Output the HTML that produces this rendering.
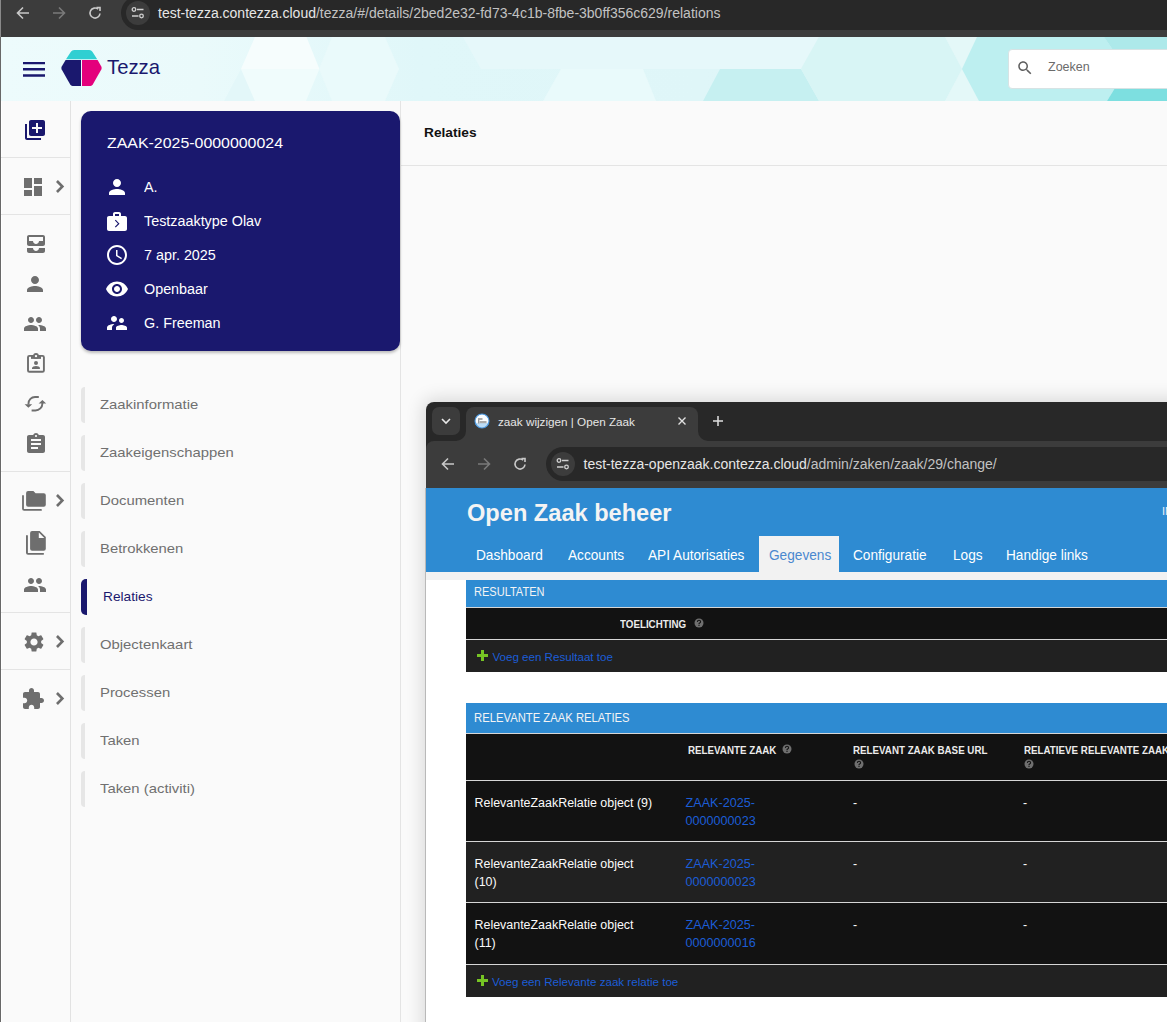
<!DOCTYPE html>
<html><head><meta charset="utf-8">
<style>
*{margin:0;padding:0;box-sizing:border-box}
html,body{width:1167px;height:1022px;overflow:hidden;background:#fafafa;font-family:"Liberation Sans",sans-serif}
.a{position:absolute}
.t{position:absolute;line-height:1;white-space:nowrap}
svg{position:absolute;overflow:visible}
</style></head><body>

<!-- ===== top browser chrome ===== -->
<div class="a" style="left:0;top:0;width:1167px;height:37px;background:#3c3c3c"></div>
<div class="a" style="left:121px;top:-4px;width:1100px;height:34px;border-radius:17px;background:#282828"></div>
<div class="a" style="left:126px;top:1px;width:24px;height:24px;border-radius:12px;background:#3c3c3c"></div>
<!-- back -->
<svg style="left:15px;top:5px" width="16" height="16" viewBox="0 0 16 16"><path d="M14 8H3M8 2.5L2.5 8 8 13.5" fill="none" stroke="#c8c8c8" stroke-width="1.6"/></svg>
<svg style="left:51px;top:5px" width="16" height="16" viewBox="0 0 16 16"><path d="M2 8h11M8 2.5L13.5 8 8 13.5" fill="none" stroke="#7a7a7a" stroke-width="1.6"/></svg>
<svg style="left:87px;top:5px" width="16" height="16" viewBox="0 0 16 16"><path d="M13 8.5A5 5 0 1 1 11.2 4.2" fill="none" stroke="#c8c8c8" stroke-width="1.6"/><path d="M9.5 2.5h3.5v3.5" fill="none" stroke="#c8c8c8" stroke-width="1.6"/></svg>
<svg style="left:131px;top:6px" width="14" height="14" viewBox="0 0 14 14"><circle cx="3" cy="3.5" r="1.8" fill="none" stroke="#d0d0d0" stroke-width="1.3"/><path d="M6 3.5h6.5M1 10h6.5" stroke="#d0d0d0" stroke-width="1.3"/><circle cx="10.5" cy="10" r="1.8" fill="none" stroke="#d0d0d0" stroke-width="1.3"/></svg>
<div class="t" style="left:158px;top:6px;font-size:14px;color:#e6e6e6">test-tezza.contezza.cloud<span style="color:#c2c2c2">/tezza/#/details/2bed2e32-fd73-4c1b-8fbe-3b0ff356c629/relations</span></div>
<div class="a" style="left:0;top:0;width:1px;height:1022px;background:#686868;z-index:50"></div><div class="a" style="left:0;top:0;width:1px;height:37px;background:#8a8a8a;z-index:51"></div><div class="a" style="left:1px;top:101px;width:1px;height:921px;background:#fff"></div>

<!-- ===== app header ===== -->
<div class="a" style="left:0;top:37px;width:1167px;height:64px;overflow:hidden;background:linear-gradient(90deg,#edfbfc 0px,#eafafb 200px,#e0f7f9 420px,#dff6f8 700px,#dcf5f7 900px)">
<svg style="left:0;top:0" width="1167" height="64" viewBox="0 0 1167 64">
<polygon points="224,64 241,32 255,64" fill="#e3f7f9"/>
<polygon points="241,32 255,0 306.5,0 319.4,32" fill="#f6fdfd"/>
<polygon points="241,32 319.4,32 306,64 255,64" fill="#f0fcfc"/>
<polygon points="319,32 332,0 385,0 399,32 385,64 332,64" fill="#eafafb"/>
<polygon points="463,0 819,0 801,32 481,32" fill="#e6f8fa"/>
<polygon points="561,32 643,32 656,64 543,64" fill="#e9fafb"/>
<polygon points="720,32 801,32 819,64 703,64" fill="#c6f0f1"/>
<polygon points="801,32 819,0 945,0 962,32 945,64 819,64" fill="#d8f5f5"/>
<polygon points="945,0 977,0 962,32 979,64 945,64 962,32" fill="#e4f8f8"/>
<polygon points="977,0 1104,0 1113,13 1167,13 1167,51 1115,51 1107,64 979,64 962,32" fill="#bdeff0"/>
<polygon points="1104,0 1167,0 1167,13 1113,13" fill="#ade9ea"/>
<polygon points="1115,51 1167,51 1167,64 1107,64" fill="#7ddfe0"/>
</svg>
</div>
<!-- hamburger -->
<svg style="left:23px;top:61.2px" width="22" height="18" viewBox="0 0 22 18"><path d="M0 2.1H22M0 8.3H22M0 14.5H22" stroke="#1a186e" stroke-width="2.4"/></svg>
<!-- logo -->
<svg style="left:61px;top:50px" width="41" height="36" viewBox="0 0 41 36">
<path d="M13.2 0H28.3Q30.3 0 31.4 1.8L36.2 9.3H5L9.9 1.8Q11 0 13.2 0Z" fill="#30cfd2"/>
<path d="M4.6 10H20V36H11.5Q10 36 9.2 34.6L0.6 19.3Q0 18 0.6 16.8Z" fill="#1a186e"/>
<path d="M21 10H36.6L40.4 16.8Q41 18 40.4 19.3L31.8 34.6Q31 36 29.5 36H21Z" fill="#e4007c"/>
</svg>
<div class="t" style="left:107px;top:56.5px;font-size:20.3px;color:#1a186e">Tezza</div>
<!-- search -->
<div class="a" style="left:1008px;top:49px;width:200px;height:40px;border-radius:4px;background:#fff;border:1px solid #d7e3e4"></div>
<svg style="left:1016px;top:59px" width="18" height="18" viewBox="0 0 24 24"><path d="M15.5 14h-.79l-.28-.27C15.41 12.59 16 11.11 16 9.5 16 5.91 13.09 3 9.5 3S3 5.91 3 9.5 5.91 16 9.5 16c1.61 0 3.09-.59 4.23-1.57l.27.28v.79l5 4.99L20.49 19l-4.99-5zm-6 0C7.01 14 5 11.99 5 9.5S7.01 5 9.5 5 14 7.01 14 9.5 11.99 14 9.5 14z" fill="#5f5f5f"/></svg>
<div class="t" style="left:1048px;top:61.2px;font-size:12.5px;color:#6b6b6b">Zoeken</div>

<!-- ===== rail ===== -->
<div class="a" style="left:70px;top:101px;width:1px;height:921px;background:#e2e2e2"></div>
<div class="a" style="left:1px;top:157px;width:69px;height:1px;background:#e4e4e4"></div>
<div class="a" style="left:1px;top:214px;width:69px;height:1px;background:#e4e4e4"></div>
<div class="a" style="left:1px;top:471px;width:69px;height:1px;background:#e4e4e4"></div>
<div class="a" style="left:1px;top:612px;width:69px;height:1px;background:#e4e4e4"></div>
<div class="a" style="left:1px;top:669px;width:69px;height:1px;background:#e4e4e4"></div>
<svg style="left:23px;top:118px" width="24" height="24" viewBox="0 0 24 24"><path d="M4 6H2v14c0 1.1.9 2 2 2h14v-2H4V6zm16-4H8c-1.1 0-2 .9-2 2v12c0 1.1.9 2 2 2h12c1.1 0 2-.9 2-2V4c0-1.1-.9-2-2-2zm-1 9h-4v4h-2v-4H9V9h4V5h2v4h4v2z" fill="#1a186e"/></svg>
<svg style="left:21px;top:175px" width="24" height="24" viewBox="0 0 24 24"><path d="M3 13h8V3H3v10zm0 8h8v-6H3v6zm10 0h8V11h-8v10zm0-18v6h8V3h-8z" fill="#6e6e6e"/></svg>
<svg style="left:55.7px;top:179.9px" width="9" height="13" viewBox="0 0 9 13"><path d="M1.9 0L8.2 6.4 1.9 12.9 0 11 4.5 6.4 0 1.9z" fill="#6e6e6e"/></svg>
<svg style="left:24px;top:232px" width="24" height="24" viewBox="0 0 24 24"><path d="M19 3H5c-1.1 0-2 .9-2 2v7c0 1.1.9 2 2 2h14c1.1 0 2-.9 2-2V5c0-1.1-.9-2-2-2zm0 6h-4c0 1.62-1.38 3-3 3s-3-1.38-3-3H5V5h14v4zm-4 7h6v3c0 1.1-.9 2-2 2H5c-1.1 0-2-.9-2-2v-3h6c0 1.66 1.34 3 3 3s3-1.34 3-3z" fill="#6e6e6e"/></svg>
<svg style="left:23px;top:272px" width="24" height="24" viewBox="0 0 24 24"><path d="M12 12c2.21 0 4-1.79 4-4s-1.79-4-4-4-4 1.79-4 4 1.79 4 4 4zm0 2c-2.67 0-8 1.34-8 4v2h16v-2c0-2.66-5.33-4-8-4z" fill="#6e6e6e"/></svg>
<svg style="left:23px;top:312px" width="24" height="24" viewBox="0 0 24 24"><path d="M16 11c1.66 0 2.99-1.34 2.99-3S17.66 5 16 5c-1.66 0-3 1.34-3 3s1.34 3 3 3zm-8 0c1.66 0 2.99-1.34 2.99-3S9.66 5 8 5C6.34 5 5 6.34 5 8s1.34 3 3 3zm0 2c-2.33 0-7 1.17-7 3.5V19h14v-2.5c0-2.33-4.67-3.5-7-3.5zm8 0c-.29 0-.62.02-.97.05 1.16.84 1.97 1.97 1.97 3.45V19h6v-2.5c0-2.33-4.67-3.5-7-3.5z" fill="#6e6e6e"/></svg>
<svg style="left:22px;top:350px" width="28" height="26" viewBox="0 0 28 26"><rect x="6" y="5.9" width="15.9" height="15.9" rx="1.4" fill="none" stroke="#6e6e6e" stroke-width="1.9"/><path d="M9 5H19V8.9H9z" fill="#6e6e6e"/><circle cx="14" cy="6" r="2.9" fill="#6e6e6e"/><circle cx="14" cy="6.1" r="1.2" fill="#fafafa"/><circle cx="14" cy="13" r="2" fill="#6e6e6e"/><path d="M10 18.9V17.8Q10.6 16 14 16T17.9 17.8V18.9z" fill="#6e6e6e"/></svg>
<svg style="left:22px;top:392px" width="28" height="24" viewBox="0 0 28 24"><path d="M16.8 5H13A6.5 6.5 0 0 0 6.5 11.5V12.5M9.6 18.5H13.4A7 7 0 0 0 20.4 11.5V10.5" fill="none" stroke="#6e6e6e" stroke-width="1.9"/><path d="M2.6 12.2H10.2L6.4 15.8zM16.6 11.6H24.2L20.4 8z" fill="#6e6e6e"/></svg>
<svg style="left:24px;top:432px" width="24" height="24" viewBox="0 0 24 24"><path d="M19 3h-4.18C14.4 1.84 13.3 1 12 1c-1.3 0-2.4.84-2.82 2H5c-1.1 0-2 .9-2 2v14c0 1.1.9 2 2 2h14c1.1 0 2-.9 2-2V5c0-1.1-.9-2-2-2zm-7 0c.55 0 1 .45 1 1s-.45 1-1 1-1-.45-1-1 .45-1 1-1zm2 14H7v-2h7v2zm3-4H7v-2h10v2zm0-4H7V7h10v2z" fill="#6e6e6e"/></svg>
<svg style="left:18px;top:486px" width="32" height="28" viewBox="0 0 32 28"><path d="M4.1 9.9Q4.1 9 5 9T5.9 9.9V23H23Q23.9 23 23.9 23.9T23 24.8H6.1Q4.1 24.8 4.1 22.8z" fill="#6e6e6e"/><path d="M10.1 5.1H15.4L17.6 7.3H25.8Q27.8 7.3 27.8 9.3V18.7Q27.8 20.7 25.8 20.7H10.1Q8.1 20.7 8.1 18.7V7.1Q8.1 5.1 10.1 5.1z" fill="#6e6e6e"/></svg>
<svg style="left:55.7px;top:494px" width="9" height="13" viewBox="0 0 9 13"><path d="M1.9 0L8.2 6.4 1.9 12.9 0 11 4.5 6.4 0 1.9z" fill="#6e6e6e"/></svg>
<svg style="left:20px;top:528px" width="30" height="30" viewBox="0 0 30 30"><path d="M6 7.9Q6 7 6.95 7T7.9 7.9V25.1H23.2Q24.1 25.1 24.1 25.9T23.2 26.7H8Q6 26.7 6 24.7z" fill="#6e6e6e"/><path d="M12.1 3.1H19.7L25.8 9.1V20.7Q25.8 22.7 23.8 22.7H12.1Q10.1 22.7 10.1 20.7V5.1Q10.1 3.1 12.1 3.1zM18.8 4.6V10H24.3z" fill="#6e6e6e" fill-rule="evenodd"/></svg>
<svg style="left:23px;top:573px" width="24" height="24" viewBox="0 0 24 24"><path d="M16 11c1.66 0 2.99-1.34 2.99-3S17.66 5 16 5c-1.66 0-3 1.34-3 3s1.34 3 3 3zm-8 0c1.66 0 2.99-1.34 2.99-3S9.66 5 8 5C6.34 5 5 6.34 5 8s1.34 3 3 3zm0 2c-2.33 0-7 1.17-7 3.5V19h14v-2.5c0-2.33-4.67-3.5-7-3.5zm8 0c-.29 0-.62.02-.97.05 1.16.84 1.97 1.97 1.97 3.45V19h6v-2.5c0-2.33-4.67-3.5-7-3.5z" fill="#6e6e6e"/></svg>
<svg style="left:21.7px;top:630px" width="24" height="24" viewBox="0 0 24 24"><path d="M19.14 12.94c.04-.3.06-.61.06-.94 0-.32-.02-.64-.07-.94l2.03-1.58c.18-.14.23-.41.12-.61l-1.92-3.32c-.12-.22-.37-.29-.59-.22l-2.39.96c-.5-.38-1.03-.7-1.62-.94l-.36-2.54c-.04-.24-.24-.41-.48-.41h-3.84c-.24 0-.43.17-.47.41l-.36 2.54c-.59.24-1.13.57-1.62.94l-2.39-.96c-.22-.08-.47 0-.59.22L2.74 8.87c-.12.21-.08.47.12.61l2.03 1.58c-.05.3-.09.63-.09.94s.02.64.07.94l-2.03 1.58c-.18.14-.23.41-.12.61l1.92 3.32c.12.22.37.29.59.22l2.39-.96c.5.38 1.03.7 1.62.94l.36 2.54c.05.24.24.41.48.41h3.84c.24 0 .44-.17.47-.41l.36-2.54c.59-.24 1.13-.56 1.62-.94l2.39.96c.22.08.47 0 .59-.22l1.92-3.32c.12-.22.07-.47-.12-.61l-2.01-1.58zM12 15.6c-1.98 0-3.6-1.62-3.6-3.6s1.62-3.6 3.6-3.6 3.6 1.62 3.6 3.6-1.62 3.6-3.6 3.6z" fill="#6e6e6e"/></svg>
<svg style="left:55.7px;top:634.9px" width="9" height="13" viewBox="0 0 9 13"><path d="M1.9 0L8.2 6.4 1.9 12.9 0 11 4.5 6.4 0 1.9z" fill="#6e6e6e"/></svg>
<svg style="left:21px;top:687px" width="24" height="24" viewBox="0 0 24 24"><path d="M20.5 11H19V7c0-1.1-.9-2-2-2h-4V3.5C13 2.12 11.88 1 10.5 1S8 2.12 8 3.5V5H4c-1.1 0-1.99.9-1.99 2v3.8H3.5c1.49 0 2.7 1.21 2.7 2.7s-1.21 2.7-2.7 2.7H2V20c0 1.1.9 2 2 2h3.8v-1.5c0-1.49 1.21-2.7 2.7-2.7 1.49 0 2.7 1.21 2.7 2.7V22H17c1.1 0 2-.9 2-2v-4h1.5c1.38 0 2.5-1.12 2.5-2.5S21.88 11 20.5 11z" fill="#6e6e6e"/></svg>
<svg style="left:55.7px;top:692px" width="9" height="13" viewBox="0 0 9 13"><path d="M1.9 0L8.2 6.4 1.9 12.9 0 11 4.5 6.4 0 1.9z" fill="#6e6e6e"/></svg>


<!-- ===== content divider ===== -->
<div class="a" style="left:400px;top:101px;width:1px;height:921px;background:#e4e4e4"></div>
<div class="a" style="left:400px;top:165px;width:767px;height:1px;background:#e4e4e4"></div>
<div class="t" style="left:424px;top:126.2px;font-size:13.7px;font-weight:bold;color:#111">Relaties</div>

<!-- ===== case card ===== -->
<div class="a" style="left:81px;top:111px;width:319px;height:240px;border-radius:10px;background:#1a186e;box-shadow:0 2px 3px rgba(0,0,0,.25)"></div>
<div class="t" style="left:107px;top:136.1px;font-size:14.6px;color:#fff;transform:scaleX(1.09);transform-origin:0 0">ZAAK-2025-0000000024</div>
<svg style="left:105px;top:175px" width="24" height="24" viewBox="0 0 24 24"><path d="M12 12c2.21 0 4-1.79 4-4s-1.79-4-4-4-4 1.79-4 4 1.79 4 4 4zm0 2c-2.67 0-8 1.34-8 4v2h16v-2c0-2.66-5.33-4-8-4z" fill="#fff"/></svg>
<svg style="left:105px;top:210px" width="24" height="24" viewBox="0 0 24 24"><path d="M20 6h-4V4c0-1.11-.89-2-2-2h-4c-1.11 0-2 .89-2 2v2H4c-1.11 0-1.99.89-1.99 2L2 19c0 1.11.89 2 2 2h16c1.11 0 2-.89 2-2V8c0-1.11-.89-2-2-2zm-6 0h-4V4h4v2z" fill="#fff"/><path d="M10.3 10.2l3.4 3.5-3.4 3.5" fill="none" stroke="#1a186e" stroke-width="1.2"/></svg>
<svg style="left:105px;top:243px" width="24" height="24" viewBox="0 0 24 24"><path d="M11.99 2C6.47 2 2 6.48 2 12s4.47 10 9.99 10C17.52 22 22 17.52 22 12S17.52 2 11.99 2zM12 20c-4.42 0-8-3.58-8-8s3.58-8 8-8 8 3.58 8 8-3.58 8-8 8zm.5-13H11v6l5.25 3.15.75-1.23-4.5-2.67z" fill="#fff"/></svg>
<svg style="left:105px;top:277px" width="24" height="24" viewBox="0 0 24 24"><path d="M12 4.5C7 4.5 2.73 7.61 1 12c1.73 4.39 6 7.5 11 7.5s9.27-3.11 11-7.5c-1.73-4.39-6-7.5-11-7.5zM12 17c-2.76 0-5-2.24-5-5s2.24-5 5-5 5 2.24 5 5-2.24 5-5 5zm0-8c-1.66 0-3 1.34-3 3s1.34 3 3 3 3-1.34 3-3-1.34-3-3-3z" fill="#fff"/></svg>
<svg style="left:105px;top:311px" width="24" height="24" viewBox="0 0 24 24"><path d="M16.5 12c1.38 0 2.49-1.12 2.49-2.5S17.88 7 16.5 7C15.12 7 14 8.12 14 9.5s1.12 2.5 2.5 2.5zM9 11c1.66 0 2.99-1.34 2.99-3S10.66 5 9 5C7.34 5 6 6.34 6 8s1.34 3 3 3zm7.5 3c-1.83 0-5.5.92-5.5 2.75V19h11v-2.25c0-1.83-3.67-2.75-5.5-2.75zM9 13c-2.33 0-7 1.17-7 3.5V19h5v-2.25c0-.85.33-2.34 2.37-3.47C8.5 13.1 7.72 13 9 13z" fill="#fff"/></svg>

<div class="t" style="left:144px;top:180.25px;font-size:14px;color:#fff;transform:scaleX(1.025);transform-origin:0 0">A.</div>
<div class="t" style="left:144px;top:214.25px;font-size:14px;color:#fff;transform:scaleX(1.025);transform-origin:0 0">Testzaaktype Olav</div>
<div class="t" style="left:144px;top:248.25px;font-size:14px;color:#fff;transform:scaleX(1.025);transform-origin:0 0">7 apr. 2025</div>
<div class="t" style="left:144px;top:282.25px;font-size:14px;color:#fff;transform:scaleX(1.025);transform-origin:0 0">Openbaar</div>
<div class="t" style="left:144px;top:316.25px;font-size:14px;color:#fff;transform:scaleX(1.025);transform-origin:0 0">G. Freeman</div>

<!-- ===== side nav ===== -->
<div class="a" style="left:81px;top:387px;width:3.5px;height:36px;border-radius:4px 0 0 4px;background:#e6e6e6"></div>
<div class="t" style="left:100.3px;top:398.24px;font-size:13.5px;color:#707070;transform:scaleX(1.1);transform-origin:0 0">Zaakinformatie</div>
<div class="a" style="left:81px;top:435px;width:3.5px;height:36px;border-radius:4px 0 0 4px;background:#e6e6e6"></div>
<div class="t" style="left:100.3px;top:446.24px;font-size:13.5px;color:#707070;transform:scaleX(1.1);transform-origin:0 0">Zaakeigenschappen</div>
<div class="a" style="left:81px;top:483px;width:3.5px;height:36px;border-radius:4px 0 0 4px;background:#e6e6e6"></div>
<div class="t" style="left:100.3px;top:494.24px;font-size:13.5px;color:#707070;transform:scaleX(1.1);transform-origin:0 0">Documenten</div>
<div class="a" style="left:81px;top:531px;width:3.5px;height:36px;border-radius:4px 0 0 4px;background:#e6e6e6"></div>
<div class="t" style="left:100.3px;top:542.24px;font-size:13.5px;color:#707070;transform:scaleX(1.1);transform-origin:0 0">Betrokkenen</div>
<div class="a" style="left:81px;top:579px;width:6px;height:36px;border-radius:5px 0 0 5px;background:#1a186e"></div>
<div class="t" style="left:103.3px;top:590.24px;font-size:13.5px;color:#1a186e;transform:scaleX(1.015);transform-origin:0 0">Relaties</div>
<div class="a" style="left:81px;top:627px;width:3.5px;height:36px;border-radius:4px 0 0 4px;background:#e6e6e6"></div>
<div class="t" style="left:100.3px;top:638.24px;font-size:13.5px;color:#707070;transform:scaleX(1.1);transform-origin:0 0">Objectenkaart</div>
<div class="a" style="left:81px;top:675px;width:3.5px;height:36px;border-radius:4px 0 0 4px;background:#e6e6e6"></div>
<div class="t" style="left:100.3px;top:686.24px;font-size:13.5px;color:#707070;transform:scaleX(1.1);transform-origin:0 0">Processen</div>
<div class="a" style="left:81px;top:723px;width:3.5px;height:36px;border-radius:4px 0 0 4px;background:#e6e6e6"></div>
<div class="t" style="left:100.3px;top:734.24px;font-size:13.5px;color:#707070;transform:scaleX(1.1);transform-origin:0 0">Taken</div>
<div class="a" style="left:81px;top:771px;width:3.5px;height:36px;border-radius:4px 0 0 4px;background:#e6e6e6"></div>
<div class="t" style="left:100.3px;top:782.24px;font-size:13.5px;color:#707070;transform:scaleX(1.1);transform-origin:0 0">Taken (activiti)</div>


<!-- ===== second browser window ===== -->
<div class="a" style="left:426px;top:402px;width:800px;height:700px;background:#282828;border-radius:8px 0 0 0;box-shadow:0 0 18px 3px rgba(0,0,0,.14)"></div>
<div class="a" style="left:432px;top:407px;width:28px;height:28px;background:#3c3c3c;border-radius:7px"></div>
<svg style="left:440px;top:415px" width="12" height="12" viewBox="0 0 12 12"><path d="M2 4l4 4 4-4" fill="none" stroke="#e8e8e8" stroke-width="1.6"/></svg>
<div class="a" style="left:466px;top:407px;width:232px;height:40px;background:#3c3c3c;border-radius:8px 8px 0 0"></div>
<svg style="left:456px;top:431px" width="10" height="10" viewBox="0 0 10 10"><path d="M10 0V10H0A10 10 0 0 0 10 0z" fill="#3c3c3c"/></svg>
<svg style="left:698px;top:431px" width="10" height="10" viewBox="0 0 10 10"><path d="M0 0V10H10A10 10 0 0 1 0 0z" fill="#3c3c3c"/></svg>
<svg style="left:474px;top:413px" width="16" height="16" viewBox="0 0 16 16"><defs><clipPath id="fc"><circle cx="8" cy="8" r="7"/></clipPath></defs><circle cx="8" cy="8" r="7" fill="#fbfdff"/><rect x="0" y="9.8" width="16" height="7" fill="#bcdcf6" clip-path="url(#fc)"/><rect x="4" y="5.3" width="4.5" height="1.4" fill="#888"/><rect x="4" y="6.5" width="1.3" height="4" fill="#999"/><rect x="5.5" y="8" width="7" height="2.2" fill="#aaa"/><circle cx="8" cy="8" r="7" fill="none" stroke="#4a98e0" stroke-width="1.1"/></svg>
<div class="t" style="left:498px;top:416.10px;font-size:11.7px;color:#e6e6e6;">zaak wijzigen | Open Zaak</div>
<svg style="left:678px;top:417px" width="8" height="8" viewBox="0 0 8 8"><path d="M0.5 0.5l7 7M7.5 0.5l-7 7" stroke="#e0e0e0" stroke-width="1.4"/></svg>
<svg style="left:713px;top:416px" width="10" height="10" viewBox="0 0 10 10"><path d="M5 0v10M0 5h10" stroke="#e0e0e0" stroke-width="1.5"/></svg>
<div class="a" style="left:426px;top:441px;width:800px;height:47px;background:#3c3c3c;border-radius:8px 0 0 0"></div>
<svg style="left:440px;top:456px" width="16" height="16" viewBox="0 0 16 16"><path d="M14 8H3M8 2.5L2.5 8 8 13.5" fill="none" stroke="#c8c8c8" stroke-width="1.6"/></svg>
<svg style="left:476px;top:456px" width="16" height="16" viewBox="0 0 16 16"><path d="M2 8h11M8 2.5L13.5 8 8 13.5" fill="none" stroke="#7a7a7a" stroke-width="1.6"/></svg>
<svg style="left:512px;top:456px" width="16" height="16" viewBox="0 0 16 16"><path d="M13 8.5A5 5 0 1 1 11.2 4.2" fill="none" stroke="#c8c8c8" stroke-width="1.6"/><path d="M9.5 2.5h3.5v3.5" fill="none" stroke="#c8c8c8" stroke-width="1.6"/></svg>
<div class="a" style="left:546px;top:447px;width:700px;height:34px;background:#282828;border-radius:17px"></div>
<div class="a" style="left:551px;top:452px;width:24px;height:24px;background:#3c3c3c;border-radius:12px"></div>
<svg style="left:556px;top:457px" width="14" height="14" viewBox="0 0 14 14"><circle cx="3" cy="3.5" r="1.8" fill="none" stroke="#d0d0d0" stroke-width="1.3"/><path d="M6 3.5h6.5M1 10h6.5" stroke="#d0d0d0" stroke-width="1.3"/><circle cx="10.5" cy="10" r="1.8" fill="none" stroke="#d0d0d0" stroke-width="1.3"/></svg>
<div class="t" style="left:583.5px;top:456.65px;font-size:14px;color:#e6e6e6;">test-tezza-openzaak.contezza.cloud<span style="color:#c2c2c2">/admin/zaken/zaak/29/change/</span></div>
<div class="a" style="left:426px;top:488px;width:800px;height:600px;background:#ffffff;"></div>
<div class="a" style="left:425px;top:488px;width:1px;height:600px;background:#b9b9b9;"></div>
<div class="a" style="left:426px;top:488px;width:800px;height:84px;background:#2e8bd2;"></div>
<div class="t" style="left:467px;top:501.08px;font-size:24px;font-weight:bold;color:#f4f4f4;transform:scaleX(0.983);transform-origin:0 0;">Open Zaak beheer</div>
<div class="t" style="left:1162px;top:505.69px;font-size:11px;color:#eef4fa;">IN</div>
<div class="a" style="left:426px;top:572px;width:800px;height:8px;background:#f2f2f2;"></div>
<div class="a" style="left:759px;top:536px;width:80px;height:36px;background:#f2f2f2;"></div>
<div class="t" style="left:476px;top:546.60px;font-size:15px;color:#fff;transform:scaleX(0.91);transform-origin:0 0;">Dashboard</div>
<div class="t" style="left:568px;top:546.60px;font-size:15px;color:#fff;transform:scaleX(0.91);transform-origin:0 0;">Accounts</div>
<div class="t" style="left:648px;top:546.60px;font-size:15px;color:#fff;transform:scaleX(0.91);transform-origin:0 0;">API Autorisaties</div>
<div class="t" style="left:769.3px;top:546.60px;font-size:15px;color:#4b88cf;transform:scaleX(0.91);transform-origin:0 0;">Gegevens</div>
<div class="t" style="left:853px;top:546.60px;font-size:15px;color:#fff;transform:scaleX(0.91);transform-origin:0 0;">Configuratie</div>
<div class="t" style="left:953.4px;top:546.60px;font-size:15px;color:#fff;transform:scaleX(0.91);transform-origin:0 0;">Logs</div>
<div class="t" style="left:1006px;top:546.60px;font-size:15px;color:#fff;transform:scaleX(0.91);transform-origin:0 0;">Handige links</div>
<div class="a" style="left:466px;top:580px;width:760px;height:27px;background:#2e8bd2;"></div>
<div class="t" style="left:473.6px;top:585.70px;font-size:12.4px;color:#f4f4f4;transform:scaleX(0.89);transform-origin:0 0;">RESULTATEN</div>
<div class="a" style="left:466px;top:607px;width:760px;height:1px;background:#d6d6d6;"></div>
<div class="a" style="left:466px;top:608px;width:760px;height:31px;background:#121212;"></div>
<div class="t" style="left:620px;top:618.86px;font-size:10.8px;font-weight:bold;color:#ececec;transform:scaleX(0.905);transform-origin:0 0;">TOELICHTING</div>
<svg style="left:694px;top:618px" width="10" height="10" viewBox="0 0 10 10"><circle cx="5" cy="5" r="4.5" fill="#6f6f6f"/><path d="M3.4 3.9Q3.5 2.3 5 2.3T6.6 3.7Q6.6 4.6 5.6 5.1Q5 5.4 5 6.1" fill="none" stroke="#121212" stroke-width="1.1"/><rect x="4.4" y="6.7" width="1.2" height="1.2" fill="#121212"/></svg>
<div class="a" style="left:466px;top:639px;width:760px;height:1px;background:#d6d6d6;"></div>
<div class="a" style="left:466px;top:640px;width:760px;height:32px;background:#212121;"></div>
<svg style="left:477px;top:650px" width="11" height="11" viewBox="0 0 11 11"><path d="M4 0h3v4h4v3H7v4H4V7H0V4h4z" fill="#76c424"/></svg>
<div class="t" style="left:492.4px;top:650.98px;font-size:11.6px;color:#1c5dd6;">Voeg een Resultaat toe</div>
<div class="a" style="left:466px;top:703px;width:760px;height:30px;background:#2e8bd2;"></div>
<div class="t" style="left:473.7px;top:711.50px;font-size:12.4px;color:#f4f4f4;transform:scaleX(0.91);transform-origin:0 0;">RELEVANTE ZAAK RELATIES</div>
<div class="a" style="left:466px;top:733px;width:760px;height:1px;background:#d6d6d6;"></div>
<div class="a" style="left:466px;top:734px;width:760px;height:46px;background:#121212;"></div>
<div class="t" style="left:688px;top:744.86px;font-size:10.8px;font-weight:bold;color:#ececec;transform:scaleX(0.905);transform-origin:0 0;">RELEVANTE ZAAK</div>
<svg style="left:782px;top:744px" width="10" height="10" viewBox="0 0 10 10"><circle cx="5" cy="5" r="4.5" fill="#6f6f6f"/><path d="M3.4 3.9Q3.5 2.3 5 2.3T6.6 3.7Q6.6 4.6 5.6 5.1Q5 5.4 5 6.1" fill="none" stroke="#121212" stroke-width="1.1"/><rect x="4.4" y="6.7" width="1.2" height="1.2" fill="#121212"/></svg>
<div class="t" style="left:853.4px;top:744.86px;font-size:10.8px;font-weight:bold;color:#ececec;transform:scaleX(0.905);transform-origin:0 0;">RELEVANT ZAAK BASE URL</div>
<svg style="left:854px;top:759px" width="10" height="10" viewBox="0 0 10 10"><circle cx="5" cy="5" r="4.5" fill="#6f6f6f"/><path d="M3.4 3.9Q3.5 2.3 5 2.3T6.6 3.7Q6.6 4.6 5.6 5.1Q5 5.4 5 6.1" fill="none" stroke="#121212" stroke-width="1.1"/><rect x="4.4" y="6.7" width="1.2" height="1.2" fill="#121212"/></svg>
<div class="t" style="left:1024px;top:744.86px;font-size:10.8px;font-weight:bold;color:#ececec;transform:scaleX(0.905);transform-origin:0 0;">RELATIEVE RELEVANTE ZAAK</div>
<svg style="left:1024px;top:759px" width="10" height="10" viewBox="0 0 10 10"><circle cx="5" cy="5" r="4.5" fill="#6f6f6f"/><path d="M3.4 3.9Q3.5 2.3 5 2.3T6.6 3.7Q6.6 4.6 5.6 5.1Q5 5.4 5 6.1" fill="none" stroke="#121212" stroke-width="1.1"/><rect x="4.4" y="6.7" width="1.2" height="1.2" fill="#121212"/></svg>
<div class="a" style="left:466px;top:780px;width:760px;height:1px;background:#d6d6d6;"></div>
<div class="a" style="left:466px;top:781px;width:760px;height:60px;background:#121212;"></div>
<div class="t" style="left:474.5px;top:797.26px;font-size:12.45px;color:#fafafa;">RelevanteZaakRelatie object (9)</div>
<div class="t" style="left:685.6px;top:797.13px;font-size:12.6px;color:#1c5dd6;">ZAAK-2025-</div>
<div class="t" style="left:685.6px;top:815.13px;font-size:12.6px;color:#1c5dd6;">0000000023</div>
<div class="t" style="left:853px;top:797.26px;font-size:12.45px;color:#fafafa;">-</div>
<div class="t" style="left:1023px;top:797.26px;font-size:12.45px;color:#fafafa;">-</div>
<div class="a" style="left:466px;top:841px;width:760px;height:1px;background:#d6d6d6;"></div>
<div class="a" style="left:466px;top:842px;width:760px;height:60px;background:#212121;"></div>
<div class="t" style="left:474.5px;top:858.26px;font-size:12.45px;color:#fafafa;">RelevanteZaakRelatie object</div>
<div class="t" style="left:474.5px;top:876.26px;font-size:12.45px;color:#fafafa;">(10)</div>
<div class="t" style="left:685.6px;top:858.13px;font-size:12.6px;color:#1c5dd6;">ZAAK-2025-</div>
<div class="t" style="left:685.6px;top:876.13px;font-size:12.6px;color:#1c5dd6;">0000000023</div>
<div class="t" style="left:853px;top:858.26px;font-size:12.45px;color:#fafafa;">-</div>
<div class="t" style="left:1023px;top:858.26px;font-size:12.45px;color:#fafafa;">-</div>
<div class="a" style="left:466px;top:902px;width:760px;height:1px;background:#d6d6d6;"></div>
<div class="a" style="left:466px;top:903px;width:760px;height:61px;background:#121212;"></div>
<div class="t" style="left:474.5px;top:919.26px;font-size:12.45px;color:#fafafa;">RelevanteZaakRelatie object</div>
<div class="t" style="left:474.5px;top:937.26px;font-size:12.45px;color:#fafafa;">(11)</div>
<div class="t" style="left:685.6px;top:919.13px;font-size:12.6px;color:#1c5dd6;">ZAAK-2025-</div>
<div class="t" style="left:685.6px;top:937.13px;font-size:12.6px;color:#1c5dd6;">0000000016</div>
<div class="t" style="left:853px;top:919.26px;font-size:12.45px;color:#fafafa;">-</div>
<div class="t" style="left:1023px;top:919.26px;font-size:12.45px;color:#fafafa;">-</div>
<div class="a" style="left:466px;top:964px;width:760px;height:1px;background:#d6d6d6;"></div>
<div class="a" style="left:466px;top:965px;width:760px;height:32px;background:#212121;"></div>
<svg style="left:477px;top:975px" width="11" height="11" viewBox="0 0 11 11"><path d="M4 0h3v4h4v3H7v4H4V7H0V4h4z" fill="#76c424"/></svg>
<div class="t" style="left:492px;top:975.98px;font-size:11.6px;color:#1c5dd6;">Voeg een Relevante zaak relatie toe</div>


</body></html>
